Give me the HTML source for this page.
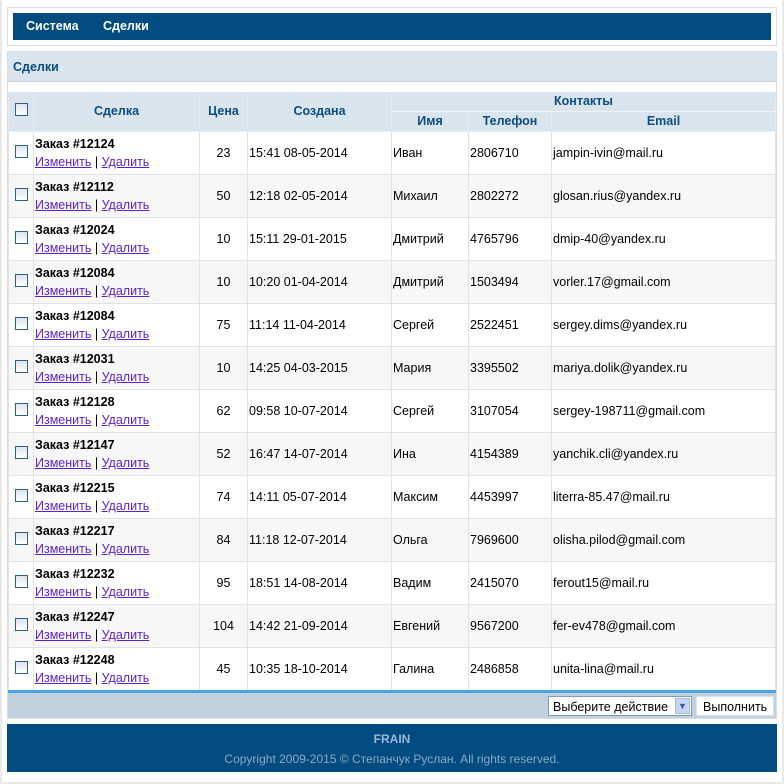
<!DOCTYPE html>
<html><head><meta charset="utf-8"><style>
*{box-sizing:border-box;margin:0;padding:0}
body{width:784px;height:784px;background:#e8e8e8;font-family:"Liberation Sans",Arial,sans-serif;font-size:12px;position:relative;overflow:hidden}
.page{position:absolute;left:2px;top:0;width:780px;height:782px;background:#fff}
.topbox{position:absolute;left:7px;top:7px;width:770px;height:39px;border:1px solid #dcdcdc;background:#fff}
.nav{position:absolute;left:13px;top:13px;width:758px;height:27px;background:#004b80;color:#fff;font-weight:bold;font-size:12.5px}
.nav span{position:absolute;top:6px}
.panel{position:absolute;left:7px;top:51px;width:770px;height:668px;border:1px solid #d8dde2;background:#fff}
.ph{position:absolute;left:0;top:0;width:768px;height:30px;background:#dae4ed;border-bottom:1px solid #c8d2dc;color:#0b4d80;font-weight:bold;font-size:12.5px;padding:8px 0 0 5px}
table{position:absolute;left:0;top:40px;border-collapse:collapse;table-layout:fixed;width:768px}
th{background:#dae4ed;color:#0b4d80;font-weight:bold;font-size:12.5px;border:1px solid #e4ebf1;border-top:none;height:20px}
td{border:1px solid #e2e2e2;height:43px;font-size:12.5px;color:#000;vertical-align:middle}
tr.a td{background:#fff}tr.b td{background:#f7f7f7}
.cb{display:inline-block;width:13px;height:13px;border:1px solid #2c5f8a;background:linear-gradient(#dfe4ea,#fff)}
td.c0{text-align:center}
td.c1{padding-left:1px;line-height:18px;padding-top:1px}
a{color:#5a1fd6;text-decoration:underline}
td.c2{text-align:center}
td.p{padding-left:1px}
.blue{position:absolute;left:0;top:638px;width:768px;height:3px;background:#4ba2e4}
.act{position:absolute;left:0;top:641px;width:768px;height:25px;background:#c0d0dc}
.sel{position:absolute;left:540px;top:3px;width:144px;height:20px;background:#fff;border:1px solid #7f9db9;padding:3px 0 0 4px;font-size:12.5px}
.sel i{position:absolute;right:1px;top:1px;width:15px;height:16px;background:#c6d6f2;border:1px solid #a4b9e0;color:#3a5aa0;font-style:normal;font-size:9px;text-align:center;line-height:14px}
.btn{position:absolute;left:688px;top:3px;width:78px;height:20px;background:#fff;border:1px solid #dde;padding:3px 0 0 6px;font-size:12.5px}
.foot{position:absolute;left:7px;top:724px;width:770px;height:48px;background:#004b80;text-align:center}
.foot .t{color:#9cb8d4;font-weight:bold;margin-top:8px}
.foot .c{color:#8fa9c4;margin-top:6px}
</style></head><body><div class="page"></div>
<div class="topbox"></div>
<div class="nav"><span style="left:13px">Система</span><span style="left:90px">Сделки</span></div>
<div class="panel">
<div class="ph">Сделки</div>
<table>
<colgroup><col style="width:25px"><col style="width:166px"><col style="width:48px"><col style="width:144px"><col style="width:77px"><col style="width:83px"><col></colgroup>
<tr><th rowspan="2" style="height:39px"><span class="cb"></span></th><th rowspan="2">Сделка</th><th rowspan="2">Цена</th><th rowspan="2">Создана</th><th colspan="3" style="height:19px;border-bottom:1px solid #eef2f6">Контакты</th></tr>
<tr><th>Имя</th><th>Телефон</th><th>Email</th></tr>
<tr class="a"><td class="c0"><span class="cb"></span></td><td class="c1"><b>Заказ #12124</b><br><a>Изменить</a> | <a>Удалить</a></td><td class="c2">23</td><td class="p">15:41 08-05-2014</td><td class="p">Иван</td><td class="p">2806710</td><td class="p">jampin-ivin@mail.ru</td></tr>
<tr class="b"><td class="c0"><span class="cb"></span></td><td class="c1"><b>Заказ #12112</b><br><a>Изменить</a> | <a>Удалить</a></td><td class="c2">50</td><td class="p">12:18 02-05-2014</td><td class="p">Михаил</td><td class="p">2802272</td><td class="p">glosan.rius@yandex.ru</td></tr>
<tr class="a"><td class="c0"><span class="cb"></span></td><td class="c1"><b>Заказ #12024</b><br><a>Изменить</a> | <a>Удалить</a></td><td class="c2">10</td><td class="p">15:11 29-01-2015</td><td class="p">Дмитрий</td><td class="p">4765796</td><td class="p">dmip-40@yandex.ru</td></tr>
<tr class="b"><td class="c0"><span class="cb"></span></td><td class="c1"><b>Заказ #12084</b><br><a>Изменить</a> | <a>Удалить</a></td><td class="c2">10</td><td class="p">10:20 01-04-2014</td><td class="p">Дмитрий</td><td class="p">1503494</td><td class="p">vorler.17@gmail.com</td></tr>
<tr class="a"><td class="c0"><span class="cb"></span></td><td class="c1"><b>Заказ #12084</b><br><a>Изменить</a> | <a>Удалить</a></td><td class="c2">75</td><td class="p">11:14 11-04-2014</td><td class="p">Сергей</td><td class="p">2522451</td><td class="p">sergey.dims@yandex.ru</td></tr>
<tr class="b"><td class="c0"><span class="cb"></span></td><td class="c1"><b>Заказ #12031</b><br><a>Изменить</a> | <a>Удалить</a></td><td class="c2">10</td><td class="p">14:25 04-03-2015</td><td class="p">Мария</td><td class="p">3395502</td><td class="p">mariya.dolik@yandex.ru</td></tr>
<tr class="a"><td class="c0"><span class="cb"></span></td><td class="c1"><b>Заказ #12128</b><br><a>Изменить</a> | <a>Удалить</a></td><td class="c2">62</td><td class="p">09:58 10-07-2014</td><td class="p">Сергей</td><td class="p">3107054</td><td class="p">sergey-198711@gmail.com</td></tr>
<tr class="b"><td class="c0"><span class="cb"></span></td><td class="c1"><b>Заказ #12147</b><br><a>Изменить</a> | <a>Удалить</a></td><td class="c2">52</td><td class="p">16:47 14-07-2014</td><td class="p">Ина</td><td class="p">4154389</td><td class="p">yanchik.cli@yandex.ru</td></tr>
<tr class="a"><td class="c0"><span class="cb"></span></td><td class="c1"><b>Заказ #12215</b><br><a>Изменить</a> | <a>Удалить</a></td><td class="c2">74</td><td class="p">14:11 05-07-2014</td><td class="p">Максим</td><td class="p">4453997</td><td class="p">literra-85.47@mail.ru</td></tr>
<tr class="b"><td class="c0"><span class="cb"></span></td><td class="c1"><b>Заказ #12217</b><br><a>Изменить</a> | <a>Удалить</a></td><td class="c2">84</td><td class="p">11:18 12-07-2014</td><td class="p">Ольга</td><td class="p">7969600</td><td class="p">olisha.pilod@gmail.com</td></tr>
<tr class="a"><td class="c0"><span class="cb"></span></td><td class="c1"><b>Заказ #12232</b><br><a>Изменить</a> | <a>Удалить</a></td><td class="c2">95</td><td class="p">18:51 14-08-2014</td><td class="p">Вадим</td><td class="p">2415070</td><td class="p">ferout15@mail.ru</td></tr>
<tr class="b"><td class="c0"><span class="cb"></span></td><td class="c1"><b>Заказ #12247</b><br><a>Изменить</a> | <a>Удалить</a></td><td class="c2">104</td><td class="p">14:42 21-09-2014</td><td class="p">Евгений</td><td class="p">9567200</td><td class="p">fer-ev478@gmail.com</td></tr>
<tr class="a"><td class="c0"><span class="cb"></span></td><td class="c1"><b>Заказ #12248</b><br><a>Изменить</a> | <a>Удалить</a></td><td class="c2">45</td><td class="p">10:35 18-10-2014</td><td class="p">Галина</td><td class="p">2486858</td><td class="p">unita-lina@mail.ru</td></tr>
</table>
<div class="blue"></div>
<div class="act"><div class="sel">Выберите действие<i>▼</i></div><div class="btn">Выполнить</div></div>
</div>
<div class="foot"><div class="t">FRAIN</div><div class="c">Copyright 2009-2015 © Степанчук Руслан. All rights reserved.</div></div>
</body></html>
